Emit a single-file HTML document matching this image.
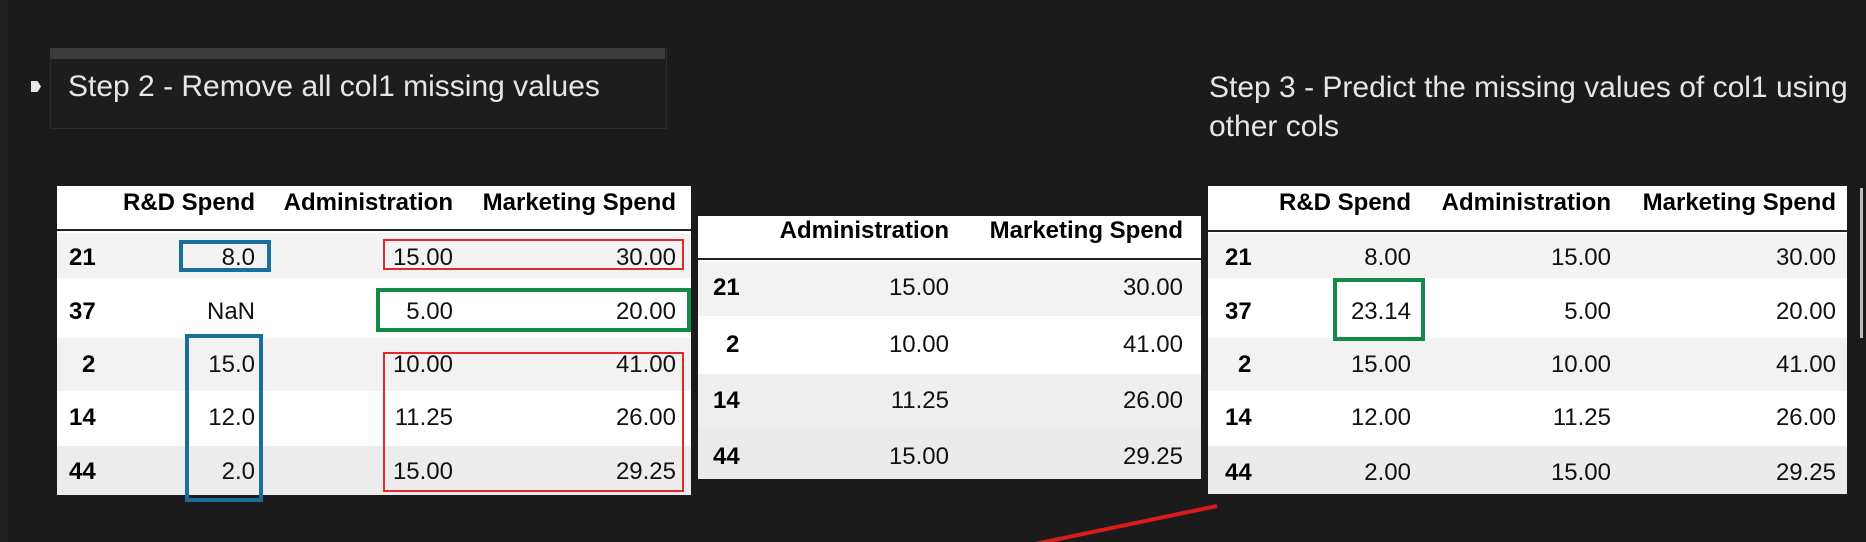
<!DOCTYPE html>
<html><head><meta charset="utf-8"><style>
body{margin:0;width:1866px;height:542px;background:#1c1b1b;position:relative;overflow:hidden;font-family:"Liberation Sans",sans-serif}
.a{position:absolute}
.tbl{position:absolute;background:#fff}
.t{position:absolute;font-size:24px;color:#111;line-height:30px;white-space:nowrap;margin-top:-15px}
.h{font-weight:bold;color:#000;font-size:24px}
.r{transform:translateX(-100%)}
.step{position:absolute;color:#e6e6e6;font-family:"Liberation Sans",sans-serif;font-size:30px;line-height:36px;white-space:nowrap;margin-top:-18px}
.box{position:absolute;box-sizing:border-box}
</style></head><body>
<div class="a" style="left:0;top:0;width:8px;height:542px;background:#202020"></div>
<!-- cell box -->
<div class="a" style="left:50px;top:48px;width:615px;height:79px;background:#1e1d1d;border:1px solid #2c2c2c"></div>
<div class="a" style="left:50px;top:48px;width:615px;height:11px;background:#3a3a3a"></div>
<div class="a" style="left:31px;top:81px;width:10px;height:11px;background:#e6e6e6;clip-path:polygon(0 0,65% 0,100% 50%,65% 100%,0 100%)"></div>
<div class="step" style="left:68px;top:87px">Step 2 - Remove all col1 missing values</div>
<div class="step" style="left:1209px;top:88px">Step 3 - Predict the missing values of col1 using</div>
<div class="step" style="left:1209px;top:127px">other cols</div>

<!-- table 1 -->
<div class="tbl" style="left:57px;top:186px;width:634px;height:309px">
<div class="a" style="left:0;top:43px;width:634px;height:2px;background:#222"></div>
<div class="a" style="left:0;top:47px;width:634px;height:45px;background:#f3f3f3"></div>
<div class="a" style="left:0;top:152px;width:634px;height:53px;background:#f2f2f2"></div>
<div class="a" style="left:0;top:260px;width:634px;height:49px;background:#ececec"></div>
</div>
<div class="t h r" style="left:255px;top:203px">R&amp;D Spend</div>
<div class="t h r" style="left:453px;top:203px">Administration</div>
<div class="t h r" style="left:676px;top:203px">Marketing Spend</div>
<div class="t h" style="left:69px;top:258px">21</div>
<div class="t h" style="left:69px;top:312px">37</div>
<div class="t h" style="left:82px;top:365px">2</div>
<div class="t h" style="left:69px;top:418px">14</div>
<div class="t h" style="left:69px;top:472px">44</div>
<div class="t r" style="left:255px;top:258px">8.0</div><div class="t r" style="left:453px;top:258px">15.00</div><div class="t r" style="left:676px;top:258px">30.00</div>
<div class="t r" style="left:255px;top:312px">NaN</div><div class="t r" style="left:453px;top:312px">5.00</div><div class="t r" style="left:676px;top:312px">20.00</div>
<div class="t r" style="left:255px;top:365px">15.0</div><div class="t r" style="left:453px;top:365px">10.00</div><div class="t r" style="left:676px;top:365px">41.00</div>
<div class="t r" style="left:255px;top:418px">12.0</div><div class="t r" style="left:453px;top:418px">11.25</div><div class="t r" style="left:676px;top:418px">26.00</div>
<div class="t r" style="left:255px;top:472px">2.0</div><div class="t r" style="left:453px;top:472px">15.00</div><div class="t r" style="left:676px;top:472px">29.25</div>
<div class="box" style="left:179px;top:240px;width:92px;height:32px;border:4px solid #1a6e9e"></div>
<div class="box" style="left:185px;top:334px;width:78px;height:168px;border:4px solid #1a6e9e"></div>
<div class="box" style="left:383px;top:239px;width:301px;height:31px;border:2px solid #e0282e"></div>
<div class="box" style="left:376px;top:288px;width:315px;height:44px;border:4px solid #138a4a"></div>
<div class="box" style="left:383px;top:352px;width:301px;height:140px;border:2px solid #e0282e"></div>

<!-- table 2 -->
<div class="tbl" style="left:698px;top:216px;width:503px;height:263px">
<div class="a" style="left:0;top:42px;width:503px;height:2px;background:#222"></div>
<div class="a" style="left:0;top:46px;width:503px;height:54px;background:#f2f2f2"></div>
<div class="a" style="left:0;top:158px;width:503px;height:54px;background:#efefef"></div>
<div class="a" style="left:0;top:212px;width:503px;height:51px;background:#ebebeb"></div>
</div>
<div class="t h r" style="left:949px;top:231px">Administration</div>
<div class="t h r" style="left:1183px;top:231px">Marketing Spend</div>
<div class="t h" style="left:713px;top:288px">21</div><div class="t r" style="left:949px;top:288px">15.00</div><div class="t r" style="left:1183px;top:288px">30.00</div>
<div class="t h" style="left:726px;top:345px">2</div><div class="t r" style="left:949px;top:345px">10.00</div><div class="t r" style="left:1183px;top:345px">41.00</div>
<div class="t h" style="left:713px;top:401px">14</div><div class="t r" style="left:949px;top:401px">11.25</div><div class="t r" style="left:1183px;top:401px">26.00</div>
<div class="t h" style="left:713px;top:457px">44</div><div class="t r" style="left:949px;top:457px">15.00</div><div class="t r" style="left:1183px;top:457px">29.25</div>

<!-- table 3 -->
<div class="tbl" style="left:1208px;top:186px;width:639px;height:308px">
<div class="a" style="left:0;top:44px;width:639px;height:2px;background:#222"></div>
<div class="a" style="left:0;top:48px;width:639px;height:44px;background:#f3f3f3"></div>
<div class="a" style="left:0;top:152px;width:639px;height:53px;background:#f2f2f2"></div>
<div class="a" style="left:0;top:260px;width:639px;height:48px;background:#ebebeb"></div>
</div>
<div class="t h r" style="left:1411px;top:203px">R&amp;D Spend</div>
<div class="t h r" style="left:1611px;top:203px">Administration</div>
<div class="t h r" style="left:1836px;top:203px">Marketing Spend</div>
<div class="t h" style="left:1225px;top:258px">21</div><div class="t r" style="left:1411px;top:258px">8.00</div><div class="t r" style="left:1611px;top:258px">15.00</div><div class="t r" style="left:1836px;top:258px">30.00</div>
<div class="t h" style="left:1225px;top:312px">37</div><div class="t r" style="left:1411px;top:312px">23.14</div><div class="t r" style="left:1611px;top:312px">5.00</div><div class="t r" style="left:1836px;top:312px">20.00</div>
<div class="t h" style="left:1238px;top:365px">2</div><div class="t r" style="left:1411px;top:365px">15.00</div><div class="t r" style="left:1611px;top:365px">10.00</div><div class="t r" style="left:1836px;top:365px">41.00</div>
<div class="t h" style="left:1225px;top:418px">14</div><div class="t r" style="left:1411px;top:418px">12.00</div><div class="t r" style="left:1611px;top:418px">11.25</div><div class="t r" style="left:1836px;top:418px">26.00</div>
<div class="t h" style="left:1225px;top:473px">44</div><div class="t r" style="left:1411px;top:473px">2.00</div><div class="t r" style="left:1611px;top:473px">15.00</div><div class="t r" style="left:1836px;top:473px">29.25</div>
<div class="box" style="left:1333px;top:278px;width:92px;height:63px;border:4px solid #138a4a"></div>
<div class="a" style="left:1860px;top:188px;width:3px;height:150px;background:#bbb"></div>

<svg class="a" style="left:0;top:0" width="1866" height="542"><line x1="1035" y1="544" x2="1217" y2="506" stroke="#d81c1c" stroke-width="4"/></svg>
</body></html>
